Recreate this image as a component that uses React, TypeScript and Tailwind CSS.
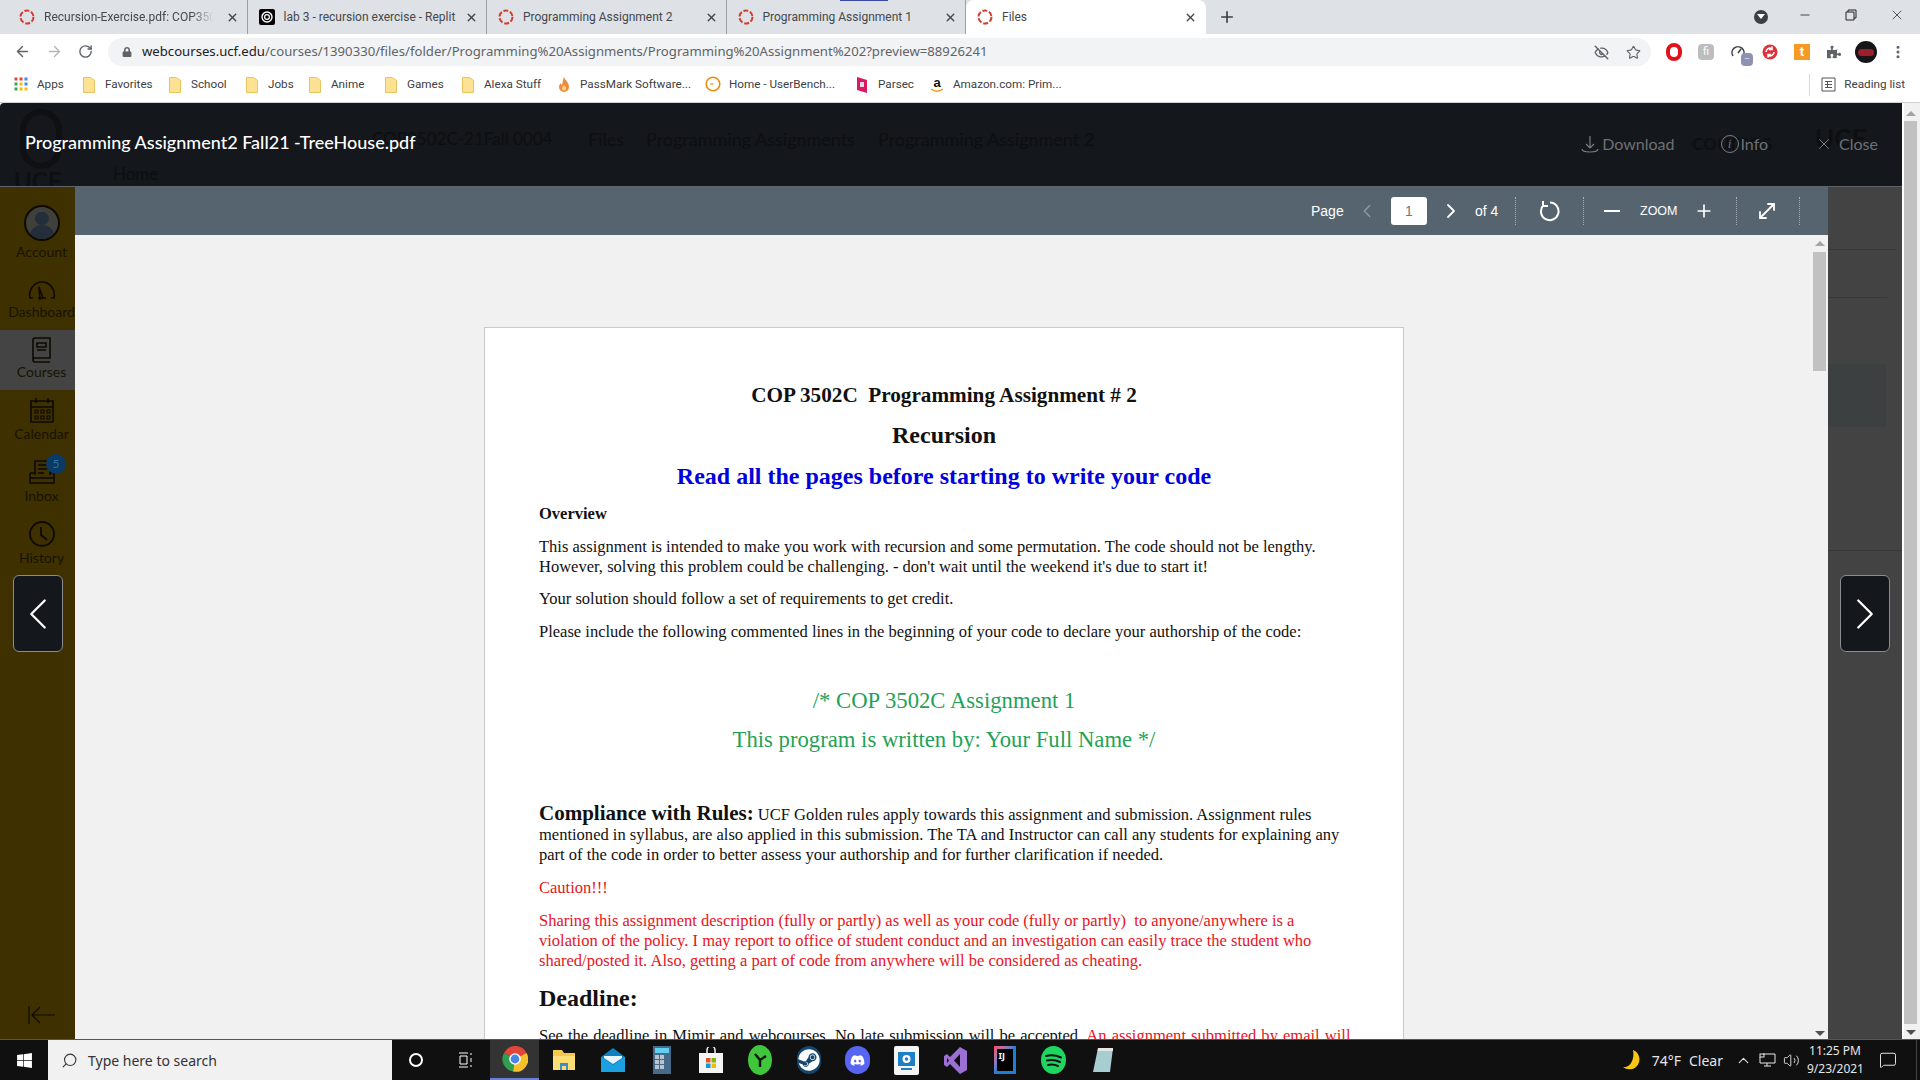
import React from 'react'
import { ArrowLeft, ArrowRight, RotateCw, Star, EyeOff, MoreVertical, X, Plus, Minus, ChevronLeft, ChevronRight, MoveDiagonal, ChevronUp, Volume2, MessageSquare, Search } from 'lucide-react'
import { FaPuzzlePiece, FaWindows, FaSteam, FaDiscord, FaLock } from 'react-icons/fa'

const CanvasIcon = () => (
  <svg width="16" height="16" viewBox="0 0 16 16" className="shrink-0">
    <circle cx="8" cy="8" r="6.5" fill="none" stroke="#d13d33" strokeWidth="2" strokeDasharray="5 1.8" />
  </svg>
)

const ReplitIcon = () => (
  <svg width="16" height="16" viewBox="0 0 16 16" className="shrink-0">
    <rect width="16" height="16" rx="2" fill="#050505" />
    <circle cx="8" cy="8" r="5" fill="none" stroke="#fff" strokeWidth="1.4" />
    <circle cx="8" cy="8" r="2.4" fill="none" stroke="#fff" strokeWidth="1.2" />
  </svg>
)

const Tab = ({ title, active, replit, fade }: { title: string; active?: boolean; replit?: boolean; fade?: boolean }) => (
  <div className={`w-[239.5px] h-[34px] shrink-0 flex items-center pl-[11px] pr-[8px] relative ${active ? 'bg-white rounded-t-lg' : 'border-r border-[#9aa0a6]'}`}>
    {replit ? <ReplitIcon /> : <CanvasIcon />}
    <span className={`ml-[9px] w-[180px] whitespace-nowrap overflow-hidden text-[12px] text-[#45484c] ${fade ? '[mask-image:linear-gradient(to_right,black_82%,transparent_94%)]' : ''}`}>{title}</span>
    <X size={13} strokeWidth={2.6} className="ml-[2px] text-[#45484c]" />
  </div>
)

const Folder = () => (
  <svg width="16" height="18" viewBox="0 0 16 18" className="shrink-0">
    <path d="M2.5 1.5h7l4 3v12h-11z" fill="#fde293" stroke="#e9c45e" />
  </svg>
)

const Apps = () => (
  <svg width="16" height="16" viewBox="0 0 16 16" className="shrink-0">
    {[0, 1, 2].map((r) =>
      [0, 1, 2].map((c) => (
        <rect key={`${r}${c}`} x={1.5 + c * 5} y={1.5 + r * 5} width="3" height="3"
          fill={[['#ea4335', '#ea4335', '#4285f4'], ['#34a853', '#fbbc04', '#4285f4'], ['#34a853', '#fbbc04', '#fbbc04']][r][c]} />
      )),
    )}
  </svg>
)

const Flame = () => (
  <svg width="16" height="18" viewBox="0 0 16 18" className="shrink-0">
    <path d="M8 1c1 3 5 5 5 10a5 5 0 0 1-10 0c0-2 1-3 2-4 0 1 .5 2 1 2 .5-3 1-5 2-8z" fill="#f08a3c" />
    <path d="M8 9c1 1 2 2 2 3.5a2 2 0 0 1-4 0C6 11 7 10 8 9z" fill="#fbd38d" />
  </svg>
)

const UserBench = () => (
  <svg width="16" height="16" viewBox="0 0 16 16" className="shrink-0">
    <circle cx="8" cy="8" r="6.8" fill="none" stroke="#ee8a0f" strokeWidth="1.6" />
    <path d="M5 8h3V7" fill="none" stroke="#ee8a0f" strokeWidth="1" />
  </svg>
)

const Parsec = () => (
  <svg width="16" height="18" viewBox="0 0 16 18" className="shrink-0">
    <path d="M3 1l10 3v13L3 14z" fill="#d81b60" />
    <rect x="6" y="6" width="4" height="5" fill="#e9d5ee" />
  </svg>
)

const Amazon = () => (
  <svg width="16" height="18" viewBox="0 0 16 18" className="shrink-0">
    <text x="8" y="11" textAnchor="middle" fontSize="13" fontWeight="700" fill="#111" fontFamily="Liberation Sans, sans-serif">a</text>
    <path d="M2 13c4 3 8 3 12 0" fill="none" stroke="#f59e0b" strokeWidth="1.5" />
  </svg>
)

const bookmarks = [
  { label: 'Apps', w: 'w-[68px]', icon: <Apps /> },
  { label: 'Favorites', w: 'w-[86px]', icon: <Folder /> },
  { label: 'School', w: 'w-[77px]', icon: <Folder /> },
  { label: 'Jobs', w: 'w-[63px]', icon: <Folder /> },
  { label: 'Anime', w: 'w-[76px]', icon: <Folder /> },
  { label: 'Games', w: 'w-[77px]', icon: <Folder /> },
  { label: 'Alexa Stuff', w: 'w-[96px]', icon: <Folder /> },
  { label: 'PassMark Software...', w: 'w-[149px]', icon: <Flame /> },
  { label: 'Home - UserBench...', w: 'w-[149px]', icon: <UserBench /> },
  { label: 'Parsec', w: 'w-[75px]', icon: <Parsec /> },
  { label: 'Amazon.com: Prim...', w: 'w-[140px]', icon: <Amazon /> },
]

const ExtBox = ({ children }: { children: React.ReactNode }) => (
  <div className="w-[32px] h-[28px] flex items-center justify-center relative">{children}</div>
)

const BrowserChrome = () => (
  <div className="shrink-0 font-['Roboto',sans-serif]">
    {/* Tab strip */}
    <div className="h-[34px] bg-[#dee1e6] flex items-center pl-[8px] relative">
      <div className="absolute left-[840px] top-0 w-[48px] h-[1px] bg-[#3b4aa8]" />
      <Tab title="Recursion-Exercise.pdf: COP3502C" fade />
      <Tab title="lab 3 - recursion exercise - Replit" replit />
      <Tab title="Programming Assignment 2" />
      <Tab title="Programming Assignment 1" />
      <Tab title="Files" active />
      <Plus size={18} strokeWidth={2.2} className="ml-[12px] text-[#3c4043]" />
      <div className="ml-auto flex items-center h-full pb-[1px]">
        <div className="w-[14px] h-[14px] rounded-full bg-[#3c4043] flex items-center justify-center mr-[30px]">
          <div className="w-0 h-0 border-x-[4px] border-x-transparent border-t-[5px] border-t-white" />
        </div>
        <Minus size={14} strokeWidth={1.4} className="text-[#222] mr-[33px] mb-[4px]" />
        <svg width="12" height="12" viewBox="0 0 12 12" className="mr-[32px] mb-[4px]">
          <path d="M3 3V1h8v8H9M1 3h8v8H1z" fill="none" stroke="#222" />
        </svg>
        <X size={16} strokeWidth={1.1} className="text-[#222] mr-[15px] mb-[4px]" />
      </div>
    </div>

    {/* Address bar */}
    <div className="h-[34px] bg-white flex items-center relative">
      <div className="w-[108px] flex items-center pl-[14px] gap-[15px] text-[#5f6368]">
        <ArrowLeft size={17} strokeWidth={2} />
        <ArrowRight size={17} strokeWidth={2} className="text-[#b4b7bb]" />
        <RotateCw size={15} strokeWidth={2.2} />
      </div>
      <div className="w-[1543px] h-[28px] mt-[2px] rounded-full bg-[#f1f3f4] flex items-center pl-[14px]">
        <FaLock size={10} className="text-[#5f6368]" />
        <span className="ml-[10px] text-[13.15px] whitespace-nowrap text-[#5f6368] font-['Noto_Sans',sans-serif]">
          <span className="text-[#202124]">webcourses.ucf.edu</span>/courses/1390330/files/folder/Programming%20Assignments/Programming%20Assignment%202?preview=88926241
        </span>
        <div className="ml-auto flex items-center gap-[17px] pr-[10px] text-[#5f6368]">
          <EyeOff size={15} strokeWidth={2.2} />
          <Star size={15} strokeWidth={1.8} />
        </div>
      </div>
      <div className="ml-[7px] flex items-center mt-[2px]">
        <ExtBox>
          <div className="w-[16px] h-[18px] rounded-full border-[4px] border-[#e0121b] flex items-center justify-center"><div className="w-[4px] h-[8px] rounded-full bg-white" /></div>
        </ExtBox>
        <ExtBox>
          <div className="w-[16px] h-[16px] rounded-sm bg-[#bdbdbd] text-white text-[11px] leading-[16px] text-center">fi</div>
        </ExtBox>
        <ExtBox>
          <svg width="16" height="16" viewBox="0 0 16 16"><path d="M3 12a6 6 0 1 1 10 0M8 9l3-4" fill="none" stroke="#444" strokeWidth="1.6" /></svg>
          <div className="absolute right-[1px] bottom-[0px] w-[12px] h-[13px] rounded-sm bg-[#8e93b4] text-white text-[8px] leading-[12px] text-center">--</div>
        </ExtBox>
        <ExtBox>
          <svg width="16" height="16" viewBox="0 0 16 16"><circle cx="8" cy="8" r="7.5" fill="#e0313a" /><path d="M4 8a4 4 0 0 1 6-3.4M12 8a4 4 0 0 1-6 3.4M10 2.5v3H7M6 13.5v-3h3" fill="none" stroke="#fff" strokeWidth="1.6" /></svg>
        </ExtBox>
        <ExtBox>
          <div className="w-[16px] h-[16px] bg-[#f59a23] text-white text-[13px] font-bold leading-[16px] text-center">t</div>
        </ExtBox>
        <ExtBox>
          <FaPuzzlePiece size={14} className="text-[#5f6368]" />
        </ExtBox>
        <ExtBox>
          <div className="w-[22px] h-[22px] rounded-full bg-[#15151a] flex items-center justify-center"><div className="w-[16px] h-[7px] rounded-full bg-[#9c1f2a]" /></div>
        </ExtBox>
        <ExtBox>
          <MoreVertical size={16} strokeWidth={2.6} className="text-[#5f6368]" />
        </ExtBox>
      </div>
    </div>

    {/* Bookmarks */}
    <div className="h-[33px] bg-white flex items-center pl-[13px] pb-[1px] text-[11.7px] text-[#3c4043] border-b border-[#d0d0d0] box-content">
      {bookmarks.map((b) => (
        <div key={b.label} className={`${b.w} shrink-0 flex items-center gap-[8px] whitespace-nowrap`}>
          {b.icon}
          <span>{b.label}</span>
        </div>
      ))}
      <div className="ml-auto flex items-center h-[22px] border-l border-[#d5d7da] pl-[11px] pr-[15px] gap-[8px]">
        <svg width="15" height="15" viewBox="0 0 15 15"><path d="M1 1h13v13H1zM4 4.5h7M4 7.5h7M4 10.5h7M6.5 4v7" fill="none" stroke="#555" /></svg>
        <span>Reading list</span>
      </div>
    </div>
  </div>
)

const ViewerHeader = () => (
  <div className="h-[84px] shrink-0 bg-[#14171b] border-b border-[#5f6469] relative flex items-center font-['Lato',sans-serif] overflow-hidden rounded-tl-sm">
    {/* dimmed page behind the overlay */}
    <div className="absolute inset-0 text-[#0d0f12] whitespace-nowrap">
      <div className="absolute left-[20px] top-[6px] w-[42px] h-[60px] rounded-full border-[6px] border-[#0e1013]" />
      <span className="absolute left-[14px] top-[60px] text-[24px] font-bold">UCF</span>
      <span className="absolute left-[372px] top-[23px] text-[17px]">COP3502C-21Fall 0004</span>
      <span className="absolute left-[588px] top-[23px] text-[18px]">Files</span>
      <span className="absolute left-[646px] top-[23px] text-[18px]">Programming Assignments</span>
      <span className="absolute left-[878px] top-[23px] text-[18px]">Programming Assignment 2</span>
      <span className="absolute left-[113px] top-[58px] text-[17px]">Home</span>
      <span className="absolute left-[1692px] top-[20px] text-[24px]">courses</span>
      <span className="absolute left-[1815px] top-[16px] text-[26px] font-bold">UCF</span>
    </div>
    <span className="relative ml-[25px] mb-[5px] text-[18px] font-medium text-white">Programming Assignment2 Fall21 -TreeHouse.pdf</span>
    <div className="relative ml-auto flex items-center text-[16px] text-[#6d7175] pr-[24px] mb-[2px]">
      <svg width="18" height="20" viewBox="0 0 18 20" fill="none" stroke="#7a7e82" strokeWidth="1.2">
        <path d="M9 2v12M5 10l4 4 4-4M1 15c0 4 16 4 16 0" />
      </svg>
      <span className="ml-[3px]">Download</span>
      <div className="ml-[46px] w-[18px] h-[18px] rounded-full border border-[#7a7e82] text-center text-[13px] leading-[16px] italic font-['Liberation_Serif',serif]">i</div>
      <span className="ml-[2px]">Info</span>
      <X size={18} strokeWidth={1.2} className="ml-[47px] text-[#85898d]" />
      <span className="ml-[6px]">Close</span>
    </div>
  </div>
)

const NavItem = ({ label, icon, active, h, labelClass }: { label: string; icon: React.ReactNode; active?: boolean; h: string; labelClass: string }) => (
  <div className={`${h} pl-[8px] flex flex-col items-center ${active ? 'bg-[#444444]' : ''}`}>
    <div className="h-[40px] flex items-center justify-center relative w-full">{icon}</div>
    <span className={`text-[14px] leading-[16px] text-[#171300] ${labelClass}`}>{label}</span>
  </div>
)

const ink = '#0d0a00'

const Sidebar = () => (
  <div className="w-[75px] shrink-0 bg-[#3f3000] flex flex-col pt-[16px] font-['Lato',sans-serif] relative">
    <NavItem h="h-[67px]" labelClass="mt-[1px]" label="Account" icon={
      <div className="w-[36px] h-[36px] rounded-full border-2 border-[#0d0a00] bg-[#3f3f3c] overflow-hidden flex flex-col items-center">
        <div className="w-[14px] h-[14px] rounded-full bg-[#242e3a] mt-[5px]" />
        <div className="w-[26px] h-[16px] rounded-t-full bg-[#242e3a]" />
      </div>
    } />
    <NavItem h="h-[60px]" labelClass="-mt-[6px]" label="Dashboard" icon={
      <svg width="28" height="20" viewBox="0 0 28 20" fill="none" stroke={ink} strokeWidth="1.6"><path d="M5 18H2c-2-8 4-16 12-16s14 8 12 16h-3M10 18h8" /><path d="M11 7l4 11-3 1z" /></svg>
    } />
    <NavItem h="h-[60px]" active labelClass="-mt-[6px]" label="Courses" icon={
      <svg width="22" height="26" viewBox="0 0 22 26" fill="none" stroke={ink} strokeWidth="1.6"><path d="M2 22V3a2 2 0 0 1 2-2h15v20H4a2 2 0 0 0 0 4h15" /><path d="M6 6h9v4H6zM6 13h9" /></svg>
    } />
    <NavItem h="h-[62px]" labelClass="-mt-[4px]" label="Calendar" icon={
      <svg width="24" height="26" viewBox="0 0 24 26" fill="none" stroke={ink} strokeWidth="1.6"><path d="M1 4h22v21H1zM1 10h22M6 1v5M18 1v5" /><path d="M5 13h3v3H5zM11 13h3v3h-3zM17 13h3v3h-3zM5 19h3v3H5zM11 19h3v3h-3zM17 19h3v3h-3z" strokeWidth="1.1" /></svg>
    } />
    <NavItem h="h-[62px]" labelClass="-mt-[4px]" label="Inbox" icon={
      <>
        <svg width="28" height="26" viewBox="0 0 28 26" fill="none" stroke={ink} strokeWidth="1.6"><path d="M7 16V2h15v14M2 14v10h24V14M2 14h5M22 14h4M2 19h24M10 6h9M10 10h9M10 14h6" /></svg>
        <div className="absolute left-[38px] top-[2px] w-[20px] h-[20px] rounded-full bg-[#0a3a66] text-[#2f6f9f] text-[12px] leading-[20px] text-center">5</div>
      </>
    } />
    <NavItem h="h-[62px]" labelClass="-mt-[4px]" label="History" icon={
      <svg width="26" height="26" viewBox="0 0 26 26" fill="none" stroke={ink} strokeWidth="1.8"><circle cx="13" cy="13" r="12" /><path d="M12 6v8l6 5" /></svg>
    } />
    <div className="mt-auto mb-[15px] flex justify-center pl-[8px]">
      <svg width="28" height="18" viewBox="0 0 28 18" fill="none" stroke={ink} strokeWidth="1.2"><path d="M1 0v18M27 9H4M12 1L4 9l8 8" /></svg>
    </div>
  </div>
)

const Sep = ({ ml }: { ml: string }) => <div className={`${ml} h-[28px] w-0 border-l border-dotted border-[#a6aeb5]`} />

const PdfToolbar = () => (
  <div className="h-[48px] shrink-0 bg-[#566470] flex items-center justify-end pr-[28px] text-white text-[14px] font-['Liberation_Sans',sans-serif]">
    <span className="w-[31px] mr-[1px]">Page</span>
    <ChevronLeft size={22} strokeWidth={1.5} className="ml-[13px] text-[#8f9aa3]" />
    <div className="ml-[13px] w-[36px] h-[28px] rounded-[3px] bg-white text-[#777] text-center leading-[28px]">1</div>
    <ChevronRight size={24} strokeWidth={1.8} className="ml-[12px]" />
    <span className="ml-[12px] w-[23px] whitespace-nowrap">of 4</span>
    <Sep ml="ml-[17px]" />
    <svg width="22" height="22" viewBox="0 0 22 22" fill="none" stroke="#fff" strokeWidth="2" className="ml-[23px]">
      <path d="M11 2.5A8.8 8.8 0 1 1 4.6 5" />
      <path d="M4 1v5h5" />
    </svg>
    <Sep ml="ml-[22px]" />
    <div className="ml-[20px] w-[16px] h-[2px] bg-white" />
    <span className="ml-[20px] w-[36px] text-[12.5px]">ZOOM</span>
    <Plus size={20} strokeWidth={2} className="ml-[18px]" />
    <Sep ml="ml-[22px]" />
    <MoveDiagonal size={24} strokeWidth={1.8} className="ml-[18px]" />
    <Sep ml="ml-[20px]" />
  </div>
)

const Document = () => (
  <div className="w-[920px] shrink-0 mt-[92px] bg-white border border-[#c9c9c9] pl-[54px] pt-[53px] h-[1200px] text-[16.53px] leading-[20px] text-[#111] font-['Liberation_Serif',serif] whitespace-nowrap">
    <div className="w-[810px] text-center">
      <p className="text-[21.2px] leading-[28px] font-bold whitespace-pre">COP 3502C  Programming Assignment # 2</p>
      <p className="mt-[12px] text-[24px] leading-[28px] font-bold">Recursion</p>
      <p className="mt-[13px] text-[24px] leading-[28px] font-bold text-[#0000dc]">Read all the pages before starting to write your code</p>
    </div>
    <p className="mt-[14px] font-bold">Overview</p>
    <p className="mt-[13px]">This assignment is intended to make you work with recursion and some permutation. The code should not be lengthy.<br />However, solving this problem could be challenging. - don't wait until the weekend it's due to start it!</p>
    <p className="mt-[12px]">Your solution should follow a set of requirements to get credit.</p>
    <p className="mt-[13px]">Please include the following commented lines in the beginning of your code to declare your authorship of the code:</p>
    <div className="w-[810px] text-center text-[22.7px] leading-[28px] text-[#1fa257]">
      <p className="mt-[45px]">/* COP 3502C Assignment 1</p>
      <p className="mt-[11px]">This program is written by: Your Full Name */</p>
    </div>
    <p className="mt-[49px]"><span className="text-[21px] font-bold">Compliance with Rules:</span> UCF Golden rules apply towards this assignment and submission. Assignment rules<br />mentioned in syllabus, are also applied in this submission. The TA and Instructor can call any students for explaining any<br />part of the code in order to better assess your authorship and for further clarification if needed.</p>
    <p className="mt-[13px] text-[#e8141c]">Caution!!!</p>
    <p className="mt-[13px] text-[#e8141c] whitespace-pre">Sharing this assignment description (fully or partly) as well as your code (fully or partly)  to anyone/anywhere is a<br />violation of the policy. I may report to office of student conduct and an investigation can easily trace the student who<br />shared/posted it. Also, getting a part of code from anywhere will be considered as cheating.</p>
    <p className="mt-[13px] text-[24px] leading-[28px] font-bold">Deadline:</p>
    <p className="mt-[14px] [word-spacing:1px]">See the deadline in Mimir and webcourses. No late submission will be accepted. <span className="text-[#e8141c]">An assignment submitted by email will</span></p>
  </div>
)

const InnerScrollbar = () => (
  <div className="w-[15px] shrink-0 flex flex-col items-center pt-[6px] pr-[2px] pb-[3px]">
    <div className="w-0 h-0 border-x-[5px] border-x-transparent border-b-[5px] border-b-[#a3a3a3]" />
    <div className="mt-[6px] w-[13px] h-[119px] bg-[#c1c1c1]" />
    <div className="mt-auto w-0 h-0 border-x-[5px] border-x-transparent border-t-[5px] border-t-[#505050]" />
  </div>
)

const RightRail = () => (
  <div className="w-[74px] shrink-0 bg-[#434343] flex flex-col">
    <div className="mt-[62px] w-[68px] border-t border-[#383838]" />
    <div className="mt-[47px] w-[59px] border-t border-[#383838]" />
    <div className="mt-[66px] w-[58px] h-[63px] bg-[#3c4040]" />
    <div className="mt-[123px] border-t border-[#383838]" />
  </div>
)

const NavButton = ({ side }: { side: 'left' | 'right' }) => (
  <div className={`absolute top-[388px] w-[50px] h-[77px] rounded-md bg-[#14171b] border border-[#8a8d8f] flex items-center justify-center ${side === 'left' ? 'left-[13px]' : 'right-[12px]'}`}>
    {side === 'left'
      ? <ChevronLeft size={54} strokeWidth={1} className="text-white shrink-0" />
      : <ChevronRight size={54} strokeWidth={1} className="text-white shrink-0" />}
  </div>
)

const Chrome = () => (
  <svg width="26" height="26" viewBox="0 0 26 26">
    <path d="M13 13L2 7a12.5 12.5 0 0 1 22.5 0z" fill="#e0463a" />
    <path d="M13 13L2 7a12.5 12.5 0 0 0 9 18.5z" fill="#2f9e4f" />
    <path d="M13 13l11.5-6A12.5 12.5 0 0 1 11 25.5z" fill="#f5c02c" />
    <circle cx="13" cy="13" r="5.8" fill="#fff" />
    <circle cx="13" cy="13" r="4.4" fill="#4a86e8" />
  </svg>
)

const Tile = ({ children, active }: { children: React.ReactNode; active?: boolean }) => (
  <div className={`w-[49px] h-full shrink-0 flex items-center justify-center ${active ? 'bg-[#333333] border-b-2 border-[#6a7fd6]' : ''}`}>{children}</div>
)

const Taskbar = () => (
  <div className="h-[41px] shrink-0 bg-[#101010] border-t border-[#555] flex items-center text-white font-['Noto_Sans',sans-serif] relative">
    <div className="w-[48px] flex justify-center"><FaWindows size={17} /></div>
    <div className="w-[344px] h-full bg-[#f1f1f1] flex items-center pl-[13px] text-[#333] text-[14px]">
      <Search size={17} strokeWidth={1.5} className="-scale-x-100" />
      <span className="ml-[10px]">Type here to search</span>
    </div>
    <div className="w-[50px] flex justify-center ml-[-1px]"><div className="w-[14px] h-[14px] rounded-full border-2 border-white" /></div>
    <div className="w-[49px] flex justify-center">
      <svg width="16" height="16" viewBox="0 0 16 16" fill="none" stroke="#fff"><path d="M1 1h9M1 15h9M2 4h7v8H2zM13 1v2M13 6v4M13 13v2" /></svg>
    </div>
    <div className="flex h-full">
      <Tile active><Chrome /></Tile>
      <Tile>
        <svg width="24" height="22" viewBox="0 0 24 22"><path d="M1 1h9l2 3h11v17H1z" fill="#f5c84c" /><rect x="1" y="7" width="22" height="14" fill="#ffdd75" /><rect x="8" y="14" width="8" height="7" fill="#3a8dc9" /><rect x="10" y="17" width="4" height="4" fill="#ffdd75" /></svg>
      </Tile>
      <Tile>
        <svg width="26" height="26" viewBox="0 0 26 26"><path d="M1 10L13 1l12 9v15H1z" fill="#0f7fc4" /><path d="M1 10l12 8 12-8v15H1z" fill="#1ba1e2" /><path d="M4 9h18v2l-9 6-9-6z" fill="#e8f5fc" /></svg>
      </Tile>
      <Tile>
        <svg width="18" height="28" viewBox="0 0 18 28"><rect width="18" height="28" fill="#47698a" /><rect x="2" y="2" width="14" height="5" fill="#5fd0ef" /><path d="M2 9h4v4H2zM7 9h4v4H7zM2 14h4v4H2zM7 14h4v4H7zM2 19h4v4H2zM7 19h4v4H7z" fill="#b8c4cf" /></svg>
      </Tile>
      <Tile>
        <svg width="24" height="26" viewBox="0 0 24 26"><path d="M8 7V3a4 4 0 0 1 8 0v4" fill="none" stroke="#f1f1f1" strokeWidth="1.5" /><rect y="6" width="24" height="20" fill="#f4f4f4" /><rect x="7" y="11" width="4.5" height="4.5" fill="#e5532d" /><rect x="12.5" y="11" width="4.5" height="4.5" fill="#7fba00" /><rect x="7" y="16.5" width="4.5" height="4.5" fill="#0a9bdc" /><rect x="12.5" y="16.5" width="4.5" height="4.5" fill="#fdb900" /></svg>
      </Tile>
      <Tile>
        <svg width="24" height="30" viewBox="0 0 24 30"><ellipse cx="12" cy="15" rx="12" ry="15" fill="#3fc63a" /><path d="M12 15l-5-6M12 15l6-4M12 15v7" stroke="#111" strokeWidth="2.4" /></svg>
      </Tile>
      <Tile>
        <div className="w-[24px] h-[28px] rounded-full bg-[#14466e] flex items-center justify-center"><FaSteam size={22} className="text-white" /></div>
      </Tile>
      <Tile>
        <div className="w-[25px] h-[28px] rounded-full bg-[#5865f2] flex items-center justify-center"><FaDiscord size={15} className="text-white" /></div>
      </Tile>
      <Tile>
        <svg width="25" height="29" viewBox="0 0 25 29"><rect width="25" height="29" rx="2" fill="#f5f5f5" /><rect x="4" y="6" width="17" height="14" fill="#1f7fc4" /><circle cx="12.5" cy="13" r="4" fill="#fff" /><circle cx="12.5" cy="13" r="1.7" fill="#1f7fc4" /><path d="M7 23h11" stroke="#1f7fc4" strokeWidth="2" /></svg>
      </Tile>
      <Tile>
        <svg width="24" height="29" viewBox="0 0 24 29"><path d="M16 1l7 4v19l-7 4L6 18l-3 3-3-2V10l3-2 3 3z" fill="#9b6fd4" /><path d="M16 8v13l-6-6.5z" fill="#101010" /><path d="M3 12v5l2-2.5z" fill="#101010" /></svg>
      </Tile>
      <Tile>
        <div className="w-[22px] h-[28px] bg-linear-to-br from-[#ff3d6e] via-[#1f7fd8] to-[#1f7fd8] p-[3px]">
          <div className="w-full h-full bg-black text-white text-[9px] leading-[11px] font-bold pl-[2px] pt-[1px]">IJ</div>
        </div>
      </Tile>
      <Tile>
        <svg width="25" height="28" viewBox="0 0 25 28"><ellipse cx="12.5" cy="14" rx="12.5" ry="14" fill="#1ed760" /><path d="M5 10c5-1.500 10-1 15 1.500M6 14.500c4-1 9-.6 13 1.500M7 19c3.500-.8 7-.4 10 1" fill="none" stroke="#111" strokeWidth="2" strokeLinecap="round" /></svg>
      </Tile>
      <Tile>
        <svg width="22" height="26" viewBox="0 0 22 26"><path d="M6 1h15l-3 24H1z" fill="#a7cdd1" /><path d="M6 1h15v3H5.600z" fill="#e5e5e5" /></svg>
      </Tile>
    </div>

    {/* Tray */}
    <div className="ml-auto flex items-center h-full text-[14px] text-[#e6e6e6]">
      <svg width="20" height="22" viewBox="0 0 20 22"><path d="M11 1a10 10 0 1 1-10 17c6 1 12-6 10-17z" fill="#f9c513" /></svg>
      <span className="ml-[10px] whitespace-nowrap">74°F</span>
      <span className="ml-[8px]">Clear</span>
      <ChevronUp size={17} strokeWidth={1.5} className="ml-[12px]" />
      <svg width="17" height="14" viewBox="0 0 17 14" fill="none" stroke="#e6e6e6" className="ml-[7px]"><path d="M4 1h12v9H1V4M8 10v3M5 13h7" /><rect x="1" y="1" width="4" height="3" /></svg>
      <Volume2 size={17} strokeWidth={1.3} className="ml-[7px]" />
      <div className="ml-[7px] w-[56px] text-center text-[12px] leading-[18px]">
        <div>11:25 PM</div>
        <div>9/23/2021</div>
      </div>
      <MessageSquare size={18} strokeWidth={1.3} className="ml-[16px]" />
      <div className="ml-[19px] mr-[3px] w-[1px] h-full bg-[#444]" />
    </div>
  </div>
)

export default function App() {
  return (
    <div className="w-screen h-screen overflow-hidden flex flex-col bg-white">
      <BrowserChrome />
      <div className="flex-1 min-h-0 flex">
        <div className="flex-1 min-w-0 flex flex-col">
          <ViewerHeader />
          <div className="flex-1 min-h-0 flex relative">
            <Sidebar />
            <div className="flex-1 min-w-0 flex flex-col">
              <PdfToolbar />
              <div className="flex-1 min-h-0 bg-[#f1f1f1] flex overflow-hidden">
                <div className="flex-1 min-w-0 flex justify-center overflow-hidden">
                  <Document />
                </div>
                <InnerScrollbar />
              </div>
            </div>
            <RightRail />
            <NavButton side="left" />
            <NavButton side="right" />
          </div>
        </div>
        {/* page scrollbar */}
        <div className="w-[18px] shrink-0 bg-[#f1f1f1] border-l-2 border-white flex flex-col items-center pr-[3px] pt-[8px] pb-[4px]">
          <div className="w-0 h-0 border-x-[5px] border-x-transparent border-b-[5px] border-b-[#a3a3a3]" />
          <div className="mt-[5px] w-[13px] flex-1 bg-[#c1c1c1]" />
          <div className="mt-[6px] w-0 h-0 border-x-[5px] border-x-transparent border-t-[5px] border-t-[#505050]" />
        </div>
      </div>
      <Taskbar />
    </div>
  )
}
